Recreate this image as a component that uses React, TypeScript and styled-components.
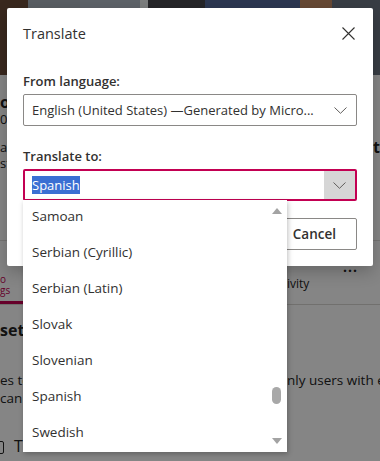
import React from 'react';
import styled, { createGlobalStyle } from 'styled-components';

const GlobalStyle = createGlobalStyle`
  html, body {
    margin: 0;
    padding: 0;
  }
  body {
    width: 380px;
    height: 461px;
    overflow: hidden;
    font-family: "Open Sans", "Liberation Sans", sans-serif;
    color: #323130;
  }
  * {
    box-sizing: border-box;
  }
`;

const Screen = styled.div`
  position: relative;
  width: 380px;
  height: 461px;
  overflow: hidden;
  background: #fff;
`;

/* 뒤쪽 페이지 (다이얼로그에 가려짐) */
const Photo = styled.div`
  height: 75px;
  background: linear-gradient(
    90deg,
    #6e4d3b 0 28px,
    #a9b2bc 28px 80px,
    #b3bdc8 80px 140px,
    #eef1f2 140px 148px,
    #47474d 148px 205px,
    #556a9c 205px 300px,
    #c48a64 300px 332px,
    #6c7582 332px 380px
  );
`;

const BgRow = styled.div<{ h: number }>`
  display: grid;
  grid-template-columns: 24px 1fr 93px;
  align-items: center;
  height: ${p => p.h}px;
  white-space: nowrap;
  color: #242424;
  font-size: 13px;
`;

const Frag = styled.span<{ bold?: boolean; size?: number; right?: boolean }>`
  overflow: hidden;
  font-weight: ${p => (p.bold ? 700 : 400)};
  font-size: ${p => p.size ?? 13}px;
  text-align: ${p => (p.right ? 'right' : 'left')};
`;

const Divider = styled.div`
  border-top: 1px solid #e1dfdd;
`;

const TabBar = styled.div`
  display: grid;
  grid-template-columns: 24px 1fr 93px;
  height: 64px;
  border-bottom: 1px solid #d8d6d4;
`;

const ActiveTab = styled.div`
  display: flex;
  flex-direction: column;
  justify-content: flex-end;
  font-size: 10px;
  line-height: 11px;
  color: #c30052;
  border-bottom: 3px solid #c30052;
  padding-bottom: 5px;
`;

const TabSide = styled.div`
  display: flex;
  flex-direction: column;
  font-size: 12px;
  color: #242424;
`;

const MoreDots = styled.div`
  align-self: flex-end;
  margin: 21px 22px 0 0;
  font-weight: 700;
  font-size: 14px;
  line-height: 10px;
  letter-spacing: 1px;
`;

const TabLabel = styled.div`
  margin-top: 3px;
`;

const CheckBox = styled.span`
  display: inline-block;
  width: 10px;
  height: 13px;
  border: 1px solid #242424;
  border-radius: 2px;
  margin-left: -6px;
  margin-right: 10px;
  vertical-align: middle;
`;

const Overlay = styled.div`
  position: absolute;
  inset: 0;
  background: rgba(0, 0, 0, 0.48);
`;

/* 다이얼로그 */
const Dialog = styled.div`
  position: absolute;
  left: 7px;
  top: 8px;
  width: 366px;
  background: #fff;
  border-radius: 2px;
  box-shadow: 0 6px 16px rgba(0, 0, 0, 0.22);
`;

const Header = styled.div`
  display: flex;
  align-items: center;
  justify-content: space-between;
  height: 50px;
  padding: 0 9px 0 16px;
`;

const Title = styled.div`
  font-size: 14.5px;
  color: #323130;
`;

const CloseButton = styled.button`
  display: flex;
  align-items: center;
  justify-content: center;
  width: 32px;
  height: 32px;
  border: 0;
  padding: 0;
  background: transparent;
`;

const Body = styled.div`
  display: flex;
  flex-direction: column;
  padding: 13px 16px 16px;
`;

const Field = styled.div<{ spaced?: boolean }>`
  display: flex;
  flex-direction: column;
  margin-top: ${p => (p.spaced ? 20 : 0)}px;
`;

const Label = styled.label`
  font-size: 13px;
  font-weight: 600;
  line-height: 20px;
  margin-bottom: 3px;
  color: #323130;
`;

const Select = styled.div<{ focused?: boolean }>`
  position: relative;
  display: flex;
  align-items: center;
  height: 32px;
  border: ${p => (p.focused ? '2px solid #c30052' : '1px solid #8a8886')};
  border-radius: 2px;
  padding-left: ${p => (p.focused ? 7 : 8)}px;
  font-size: 13px;
  white-space: nowrap;
`;

const SelectText = styled.span`
  flex: 1;
  overflow: hidden;
`;

const Highlight = styled.span`
  background: #3a6fd3;
  color: #fff;
  line-height: 18px;
  display: inline-block;
`;

const Caret = styled.div<{ pressed?: boolean }>`
  display: flex;
  align-items: center;
  justify-content: center;
  align-self: stretch;
  width: 31px;
  background: ${p => (p.pressed ? '#d6d6d6' : 'transparent')};
`;

const Actions = styled.div`
  display: flex;
  justify-content: flex-end;
  gap: 8px;
  margin-top: 17px;
`;

const Button = styled.button<{ primary?: boolean }>`
  min-width: 80px;
  height: 32px;
  padding: 0 20px;
  border-radius: 2px;
  font-family: inherit;
  font-size: 13.5px;
  font-weight: 600;
  border: 1px solid ${p => (p.primary ? '#c30052' : '#8a8886')};
  background: ${p => (p.primary ? '#c30052' : '#fff')};
  color: ${p => (p.primary ? '#fff' : '#323130')};
`;

/* 드롭다운 목록 */
const List = styled.div`
  position: absolute;
  left: -2px;
  top: calc(100% + 1px);
  width: 264px;
  height: 252px;
  display: flex;
  background: #fff;
  box-shadow: 1px 2px 5px rgba(0, 0, 0, 0.25);
  z-index: 2;
`;

const Options = styled.div`
  flex: 1;
  display: flex;
  flex-direction: column;
`;

const Option = styled.div`
  height: 36px;
  padding: 6px 9px 0;
  line-height: 20px;
  font-size: 13.5px;
  color: #323130;
`;

const Scrollbar = styled.div`
  position: relative;
  width: 15px;
  display: flex;
  flex-direction: column;
  align-items: center;
  justify-content: space-between;
  padding: 8px 0 8px 0;
  margin-right: 3px;
`;

const Arrow = styled.div<{ down?: boolean }>`
  width: 0;
  height: 0;
  border-left: 5px solid transparent;
  border-right: 5px solid transparent;
  ${p =>
    p.down
      ? 'border-top: 6px solid #a3a3a3;'
      : 'border-bottom: 6px solid #a3a3a3;'}
`;

const Thumb = styled.div`
  position: absolute;
  left: 3px;
  width: 9px;
  height: 17px;
  border-radius: 5px;
  background: #a8a8a8;
`;

const Chevron = () => (
  <svg width="13" height="7" viewBox="0 0 13 7">
    <polyline points="0.5,0.5 6.5,6.3 12.5,0.5" fill="none" stroke="#605e5c" strokeWidth="1" />
  </svg>
);

const languages = [
  'Samoan',
  'Serbian (Cyrillic)',
  'Serbian (Latin)',
  'Slovak',
  'Slovenian',
  'Spanish',
  'Swedish',
];

export default function App() {
  // 스크롤 위치 (목록 기준)
  const scrollRatio = 0.83;

  return (
    <>
      <GlobalStyle />
      <Screen>
        <Photo />
        <BgRow h={18} />
        <BgRow h={18}>
          <Frag bold size={16}>or</Frag>
        </BgRow>
        <BgRow h={15}>
          <Frag>0,</Frag>
        </BgRow>
        <BgRow h={13} />
        <BgRow h={16}>
          <Frag>ab</Frag>
          <span />
          <Frag bold size={16} right>
            rt
          </Frag>
        </BgRow>
        <BgRow h={15}>
          <Frag>sf</Frag>
        </BgRow>
        <BgRow h={70} />
        <Divider />
        <TabBar>
          <ActiveTab>
            <span>o</span>
            <span>gs</span>
          </ActiveTab>
          <span />
          <TabSide>
            <MoreDots>...</MoreDots>
            <TabLabel>ivity</TabLabel>
          </TabSide>
        </TabBar>
        <BgRow h={15} />
        <BgRow h={20}>
          <Frag bold size={16}>sett</Frag>
        </BgRow>
        <BgRow h={30} />
        <BgRow h={20}>
          <Frag size={13.5}>es to</Frag>
          <span />
          <Frag size={13.5}>nly users with e</Frag>
        </BgRow>
        <BgRow h={16}>
          <Frag size={13.5}>can</Frag>
        </BgRow>
        <BgRow h={30} />
        <BgRow h={20}>
          <Frag size={16}>
            <CheckBox />T
          </Frag>
        </BgRow>

        <Overlay />

        <Dialog>
          <Header>
            <Title>Translate</Title>
            <CloseButton aria-label="Close">
              <svg width="13" height="13" viewBox="0 0 13 13">
                <path d="M0.5 0.5 L12.5 12.5 M12.5 0.5 L0.5 12.5" stroke="#323130" strokeWidth="1.1" />
              </svg>
            </CloseButton>
          </Header>
          <Body>
            <Field>
              <Label>From language:</Label>
              <Select>
                <SelectText>English (United States) —Generated by Micro...</SelectText>
                <Caret>
                  <Chevron />
                </Caret>
              </Select>
            </Field>
            <Field spaced>
              <Label>Translate to:</Label>
              <Select focused>
                <SelectText>
                  <Highlight>Spanish</Highlight>
                </SelectText>
                <Caret pressed>
                  <Chevron />
                </Caret>
                <List>
                  <Options>
                    {languages.map(lang => (
                      <Option key={lang}>{lang}</Option>
                    ))}
                  </Options>
                  <Scrollbar>
                    <Arrow />
                    <Thumb style={{ top: 8 + scrollRatio * 216 }} />
                    <Arrow down />
                  </Scrollbar>
                </List>
              </Select>
            </Field>
            <Actions>
              <Button primary>Translate</Button>
              <Button>Cancel</Button>
            </Actions>
          </Body>
        </Dialog>
      </Screen>
    </>
  );
}
